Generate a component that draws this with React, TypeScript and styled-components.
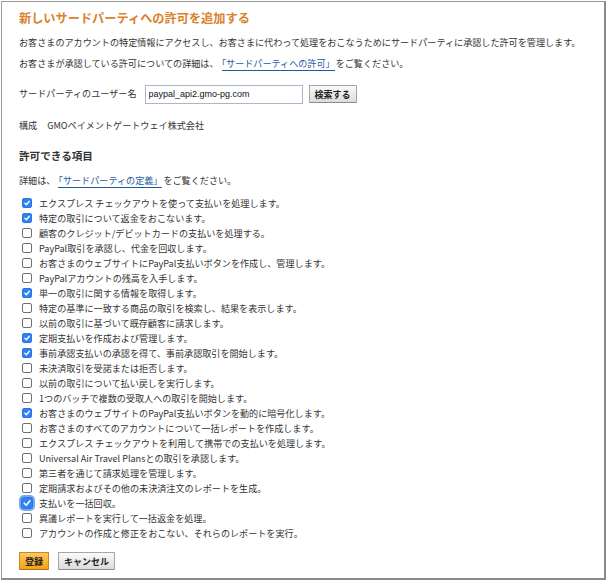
import styled, { createGlobalStyle } from "styled-components";

const GlobalStyle = createGlobalStyle`
  html, body {
    margin: 0;
    padding: 0;
    background: #fff;
  }
  body {
    font-family: "Noto Sans CJK JP", "Liberation Sans", sans-serif;
    color: #333;
  }
`;

const Frame = styled.div`
  box-sizing: border-box;
  margin: 1px 0 0 1px;
  width: 605px;
  height: 579px;
  border: 1px solid #9a9a96;
  border-right: 2px solid #8a8a86;
  border-bottom: 2px solid #8a8a86;
  padding: 8px 0 0 17px;
  display: flex;
  flex-direction: column;
`;

const Title = styled.h1`
  margin: 0;
  font-size: 12.2px;
  line-height: 16px;
  font-weight: 700;
  color: #d9822b;
`;

const Para = styled.p<{ $top: number }>`
  margin: ${({ $top }) => $top}px 0 0;
  font-size: 9.1px;
  line-height: 14px;
  white-space: nowrap;
`;

const Link = styled.a`
  color: #1d5aa3;
  text-decoration: none;
  border-bottom: 1px solid #1d5aa3;
  margin: 0 1px 0 3px;
`;

const FormRow = styled.div`
  margin-top: 14px;
  height: 20px;
  display: flex;
  align-items: center;
  font-size: 9.1px;
`;

const FieldLabel = styled.label`
  margin-right: 8px;
  padding-bottom: 3px;
`;

const TextField = styled.input`
  box-sizing: border-box;
  width: 158px;
  height: 19px;
  border: 1px solid #a9b7cc;
  padding: 0 3px;
  font-family: "Liberation Sans", sans-serif;
  font-size: 9px;
  color: #111;
  outline: none;
`;

const Button = styled.button<{ $primary?: boolean }>`
  box-sizing: border-box;
  height: 18px;
  padding: 0 5px;
  white-space: nowrap;
  font-family: "Noto Sans CJK JP", sans-serif;
  font-size: 9px;
  font-weight: 700;
  color: #222;
  border: 1px solid ${({ $primary }) => ($primary ? "#c68a22" : "#a6a6a6")};
  border-bottom-color: ${({ $primary }) => ($primary ? "#a8721a" : "#8c8c8c")};
  background: ${({ $primary }) =>
    $primary
      ? "linear-gradient(#ffc85e, #f6a312)"
      : "linear-gradient(#fafafa, #dcdcdc)"};
  border-radius: 1px;
  cursor: pointer;
`;

const SearchButton = styled(Button)`
  margin-left: 6px;
`;

const Company = styled.div`
  margin-top: 14px;
  font-size: 9.1px;
  line-height: 14px;
  display: flex;
  gap: 10px;
`;

const Heading = styled.h2`
  margin: 16px 0 0;
  font-size: 10.6px;
  line-height: 16px;
  font-weight: 700;
  color: #333;
`;

const List = styled.ul`
  list-style: none;
  margin: 8px 0 0;
  padding: 0;
`;

const Item = styled.li`
  height: 15px;
  display: flex;
  align-items: center;
  font-size: 9.1px;
  white-space: nowrap;
`;

const BoxSlot = styled.span`
  width: 10px;
  height: 10px;
  margin: 0 7px 0 3px;
  display: flex;
  align-items: center;
  justify-content: center;
  flex-shrink: 0;
`;

const Box = styled.span<{ $checked: boolean; $focused?: boolean }>`
  box-sizing: border-box;
  width: ${({ $focused }) => ($focused ? 12 : 10)}px;
  height: ${({ $focused }) => ($focused ? 12 : 10)}px;
  border-radius: ${({ $focused }) => ($focused ? 3 : 2)}px;
  border: 1px solid ${({ $checked }) => ($checked ? "#2c74e8" : "#6f6f6f")};
  background: ${({ $checked }) => ($checked ? "#3181f2" : "#fff")};
  box-shadow: ${({ $focused }) => ($focused ? "0 0 0 2px #7aa7ec" : "none")};
  display: flex;
  align-items: center;
  justify-content: center;
`;

const Actions = styled.div`
  margin-top: 12px;
  display: flex;
  gap: 9px;
`;

const items: [string, boolean][] = [
  ["エクスプレス チェックアウトを使って支払いを処理します。", true],
  ["特定の取引について返金をおこないます。", true],
  ["顧客のクレジット/デビットカードの支払いを処理する。", false],
  ["PayPal取引を承認し、代金を回収します。", false],
  ["お客さまのウェブサイトにPayPal支払いボタンを作成し、管理します。", false],
  ["PayPalアカウントの残高を入手します。", false],
  ["単一の取引に関する情報を取得します。", true],
  ["特定の基準に一致する商品の取引を検索し、結果を表示します。", false],
  ["以前の取引に基づいて既存顧客に請求します。", false],
  ["定期支払いを作成および管理します。", true],
  ["事前承認支払いの承認を得て、事前承認取引を開始します。", true],
  ["未決済取引を受諾または拒否します。", false],
  ["以前の取引について払い戻しを実行します。", false],
  ["1つのバッチで複数の受取人への取引を開始します。", false],
  ["お客さまのウェブサイトのPayPal支払いボタンを動的に暗号化します。", true],
  ["お客さまのすべてのアカウントについて一括レポートを作成します。", false],
  ["エクスプレス チェックアウトを利用して携帯での支払いを処理します。", false],
  ["Universal Air Travel Plansとの取引を承認します。", false],
  ["第三者を通じて請求処理を管理します。", false],
  ["定期請求およびその他の未決済注文のレポートを生成。", false],
  ["支払いを一括回収。", true],
  ["異議レポートを実行して一括返金を処理。", false],
  ["アカウントの作成と修正をおこない、それらのレポートを実行。", false],
];

const Check = ({ size }: { size: number }) => (
  <svg width={size} height={size} viewBox="0 0 10 10">
    <path
      d="M2.2 5.2 L4.2 7.2 L7.9 2.8"
      fill="none"
      stroke="#fff"
      strokeWidth="1.6"
      strokeLinecap="round"
      strokeLinejoin="round"
    />
  </svg>
);

const App = () => {
  return (
    <>
      <GlobalStyle />
      <Frame>
        <Title>新しいサードパーティへの許可を追加する</Title>
        <Para $top={9}>
          お客さまのアカウントの特定情報にアクセスし、お客さまに代わって処理をおこなうためにサードパーティに承認した許可を管理します。
        </Para>
        <Para $top={7}>
          お客さまが承認している許可についての詳細は、
          <Link href="#">「サードパーティへの許可」</Link>
          をご覧ください。
        </Para>
        <FormRow>
          <FieldLabel>サードパーティのユーザー名</FieldLabel>
          <TextField defaultValue="paypal_api2.gmo-pg.com" />
          <SearchButton>検索する</SearchButton>
        </FormRow>
        <Company>
          <span>構成</span>
          <span>GMOペイメントゲートウェイ株式会社</span>
        </Company>
        <Heading>許可できる項目</Heading>
        <Para $top={9}>
          詳細は、<Link href="#">「サードパーティの定義」</Link>をご覧ください。
        </Para>
        <List>
          {items.map(([text, checked], i) => {
            const focused = i === 20;
            return (
              <Item key={i}>
                <BoxSlot>
                  <Box $checked={checked} $focused={focused}>
                    {checked && <Check size={focused ? 10 : 8} />}
                  </Box>
                </BoxSlot>
                {text}
              </Item>
            );
          })}
        </List>
        <Actions>
          <Button $primary>登録</Button>
          <Button>キャンセル</Button>
        </Actions>
      </Frame>
    </>
  );
};

export default App;
